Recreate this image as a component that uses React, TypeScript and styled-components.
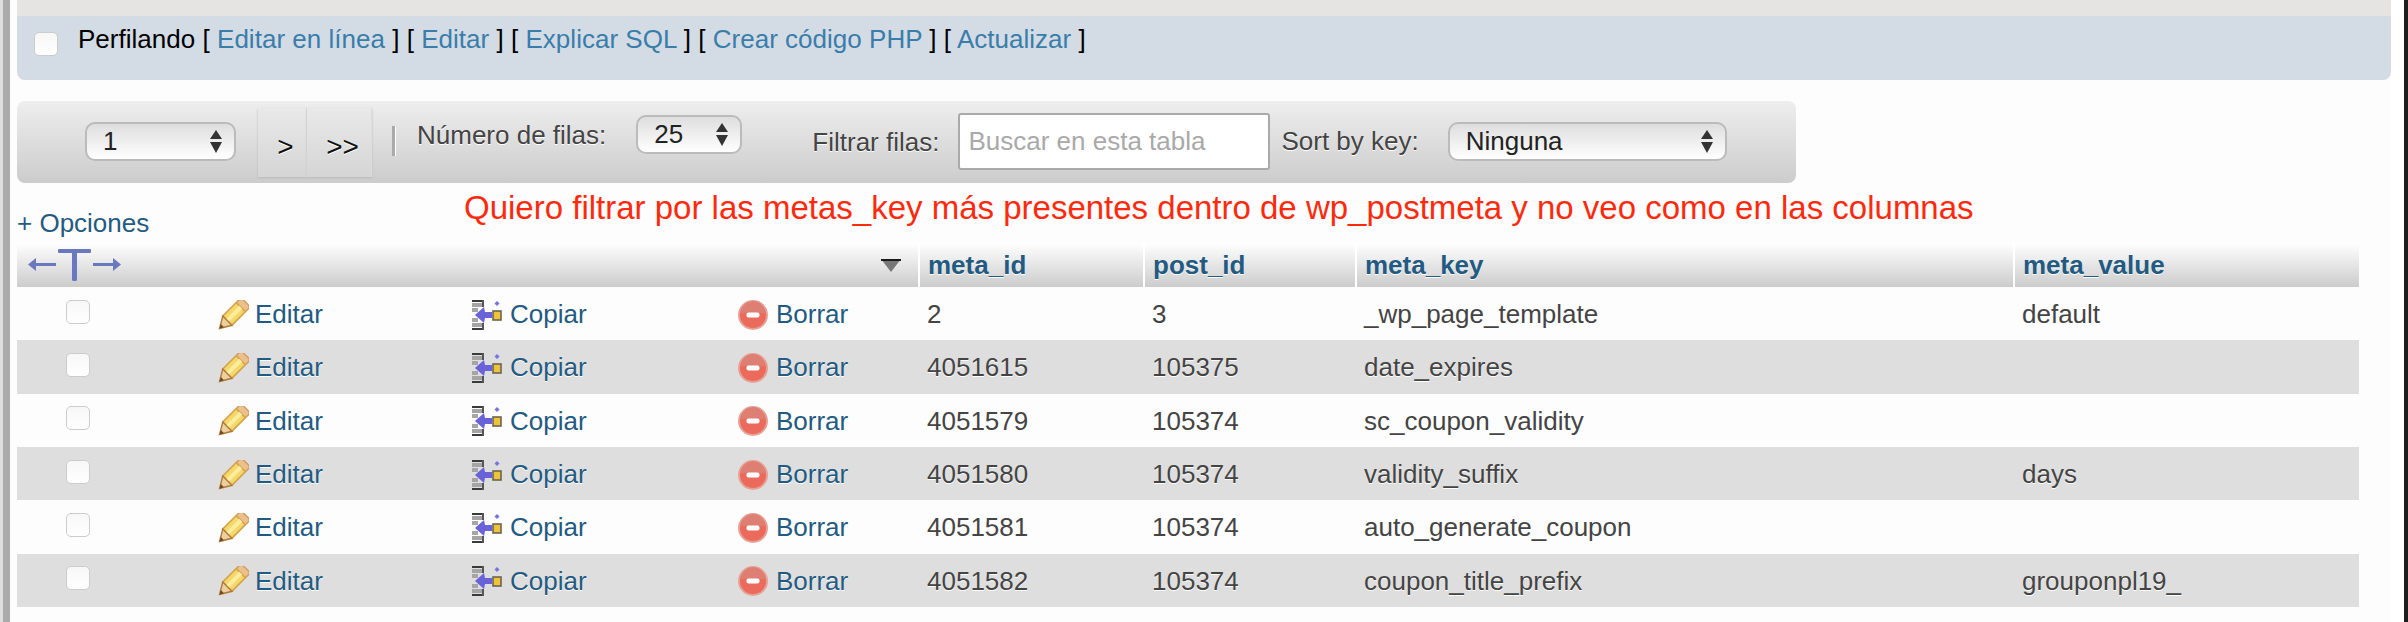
import React from 'react';
import styled, { createGlobalStyle } from 'styled-components';

const GlobalStyle = createGlobalStyle`
  html, body {
    background: #ffffff;
    margin: 0;
    overflow: hidden;
    padding: 0;
  }
  body {
    color: #444444;
    font-family: "Liberation Sans", Arial, sans-serif;
    font-size: 26px;
  }
`;

const Frame = styled.div`
  display: flex;
  height: 622px;
  width: 2408px;
`;

const Rail = styled.div`
  background: #aaaaaa;
  border-left: 3px solid #dddddd;
  box-sizing: border-box;
  flex: 0 0 10px;
`;

const Main = styled.main`
  background: #fdfdfd;
  flex: 1;
  min-width: 0;
  padding-left: 7px;
`;

const Gutter = styled.div`
  background: #ffffff;
  flex: 0 0 13px;
`;

const Edge = styled.div`
  background: #1e1e1e;
  flex: 0 0 4px;
`;

const TopBand = styled.div`
  background: #e5e4e3;
  height: 16px;
`;

const Notice = styled.div`
  align-items: flex-start;
  background: #d3dce4;
  border-radius: 0 0 8px 8px;
  box-sizing: border-box;
  color: #000000;
  display: flex;
  height: 64px;
  padding: 8px 0 0 17px;
  margin-bottom: 21px;
`;

const NoticeText = styled.span`
  letter-spacing: 0.02px;
  line-height: 30px;
  margin-left: 20px;
  a {
    color: #3a7dab;
    text-decoration: none;
  }
`;

const CheckBox = styled.input.attrs({ type: 'checkbox' })<{ $top?: number }>`
  appearance: none;
  background: linear-gradient(#f7f7f7, #ffffff);
  border: 1px solid #cccccc;
  border-radius: 5px;
  box-sizing: border-box;
  display: block;
  height: 24px;
  margin: ${(p) => p.$top ?? 0}px 0 0 0;
  width: 24px;
`;

const Toolbar = styled.div`
  align-items: flex-start;
  background: linear-gradient(#eeeeee, #cccccc);
  border-radius: 8px;
  box-sizing: border-box;
  color: #444444;
  display: flex;
  height: 82px;
  padding-left: 68px;
  text-shadow: 0 1px 0 #ffffff;
  width: 1779px;
`;

const SelectShell = styled.div<{ $left: number; $top: number; $width: number }>`
  flex: 0 0 ${(p) => p.$width}px;
  height: 39px;
  margin-left: ${(p) => p.$left}px;
  margin-top: ${(p) => p.$top}px;
  position: relative;
`;

const NativeSelect = styled.select`
  appearance: none;
  background: linear-gradient(#dedede, #ffffff);
  border: 2px solid #bbbbbb;
  border-radius: 10px;
  box-sizing: border-box;
  color: #222222;
  font-family: inherit;
  font-size: 26px;
  height: 39px;
  padding: 0 0 2px 16px;
  width: 100%;
`;

const StepArrows = styled.svg`
  height: 24px;
  pointer-events: none;
  position: absolute;
  right: 13px;
  top: 8px;
  width: 14px;
`;

const NavGroup = styled.div`
  display: flex;
  height: 69px;
  margin-left: 22px;
  margin-top: 7px;
`;

const NavButton = styled.button<{ $width: number }>`
  background: linear-gradient(#e9e9e9, #d5d5d5);
  border: 0;
  border-right: 1px solid #dddddd;
  box-shadow: 0 1px 2px #bbbbbb;
  color: #111111;
  font-family: inherit;
  font-size: 28px;
  padding: 8px 0 0 7px;
  text-shadow: 0 1px 0 #ffffff;
  width: ${(p) => p.$width}px;
`;

const Divider = styled.div`
  background: #aaaaaa;
  box-shadow: 1px 0 0 #ffffff;
  flex: 0 0 3px;
  height: 30px;
  margin-left: 20px;
  margin-top: 25px;
`;

const BarLabel = styled.label<{ $left: number; $top: number }>`
  line-height: 30px;
  margin-left: ${(p) => p.$left}px;
  margin-top: ${(p) => p.$top}px;
  white-space: nowrap;
`;

const SearchInput = styled.input`
  background: #ffffff;
  border: 2px solid #aaaaaa;
  border-radius: 3px;
  box-sizing: border-box;
  flex: 0 0 312px;
  font-family: inherit;
  font-size: 26px;
  height: 57px;
  margin-left: 19px;
  margin-top: 12px;
  min-width: 0;
  padding: 0 0 0 8px;
  width: 312px;
  &::placeholder {
    color: #a9a9a9;
  }
`;

const OptionsRow = styled.div`
  align-items: flex-start;
  display: flex;
  height: 60px;
`;

const OptionsLink = styled.a`
  color: #235a81;
  flex: 0 0 447px;
  line-height: 30px;
  margin-top: 25px;
`;

const RequestNote = styled.p`
  color: #ff2a0d;
  font-size: 33px;
  line-height: 36px;
  margin: 7px 0 0 0;
  white-space: nowrap;
`;

const DataTable = styled.table`
  border-collapse: collapse;
  border-spacing: 0;
  table-layout: fixed;
  width: 2342px;
`;

const HeadCell = styled.th`
  background: linear-gradient(#ffffff, #cccccc);
  border-right: 2px solid #ffffff;
  box-sizing: border-box;
  color: #235a81;
  font-size: 26px;
  font-weight: 700;
  height: 44px;
  padding: 0 0 0 8px;
  text-align: left;
  text-shadow: 0 1px 0 #ffffff;
  vertical-align: middle;
  &:last-child {
    border-right: 0;
  }
`;

const HeadTools = styled.div`
  align-items: center;
  display: flex;
  justify-content: space-between;
  padding-right: 17px;
`;

const Row = styled.tr<{ $even: boolean }>`
  background: ${(p) => (p.$even ? '#dedede' : '#fdfdfd')};
  height: 53.33px;
  text-shadow: ${(p) => (p.$even ? '0 1px 0 #ffffff' : 'none')};
`;

const Cell = styled.td`
  box-sizing: border-box;
  color: #444444;
  padding: 2px 0 0 8px;
  vertical-align: middle;
  white-space: nowrap;
`;

const CheckCell = styled.td`
  box-sizing: border-box;
  padding: 0 0 4px 49px;
  vertical-align: middle;
`;

const ActionLink = styled.a`
  align-items: center;
  color: #235a81;
  display: flex;
  gap: 6px;
`;

const ColumnResizeIcon = () => (
  <svg width="93" height="34" viewBox="0 0 93 34" style={{ marginLeft: 3 }}>
    <g fill="#6a78bd">
      <rect x="4" y="15" width="24" height="3" />
      <path d="M0 16.5 L8 10 V23 Z" />
      <rect x="65" y="15" width="24" height="3" />
      <path d="M93 16.5 L85 10 V23 Z" />
      <rect x="30" y="1" width="33" height="4" rx="1" />
      <rect x="44" y="1" width="5" height="32" rx="1.5" />
    </g>
  </svg>
);

const SortIcon = () => (
  <svg width="20" height="13" viewBox="0 0 20 13">
    <path d="M0 0 H20 L10 13 Z" fill="#777777" />
    <path d="M0 1 H20" stroke="#1a1a1a" strokeWidth="2" />
  </svg>
);

const PencilIcon = () => (
  <svg width="32" height="30" viewBox="0 0 32 30">
    <g transform="rotate(45 16 15)">
      <rect x="9.5" y="-3" width="13" height="8" rx="2.5" fill="#ecc08c" stroke="#d09a5c" strokeWidth="1.4" />
      <rect x="9.5" y="4" width="13" height="19" fill="#f4d968" stroke="#d6a24e" strokeWidth="1.6" />
      <rect x="14" y="4" width="4" height="19" fill="#fbeca0" />
      <path d="M9.5 23 H22.5 L16 34 Z" fill="#eccfa0" stroke="#b27a36" strokeWidth="1.4" />
      <path d="M13.8 30 L18.2 30 L16 34 Z" fill="#6d4620" />
    </g>
  </svg>
);

const CopyIcon = () => (
  <svg width="30" height="30" viewBox="0 0 30 30" style={{ marginRight: 2 }}>
    <g fill="#3a3a3a">
      <rect x="0" y="0" width="12" height="2" />
      <rect x="0" y="28" width="12" height="2" />
    </g>
    <g fill="#a5a5a5">
      <rect x="0" y="3" width="10" height="4" />
      <rect x="0" y="8" width="6" height="4" />
      <rect x="0" y="18" width="6" height="4" />
      <rect x="0" y="23" width="10" height="4" />
    </g>
    <rect x="10" y="0" width="2" height="7" fill="#555555" />
    <rect x="10" y="23" width="2" height="7" fill="#555555" />
    <path d="M3 15 L12 7 L13 12 H20 V18 H13 L12 23 Z" fill="#6a62d8" />
    <rect x="21" y="11" width="8" height="9" fill="#f0c23a" stroke="#6a6550" strokeWidth="1.6" />
    <path d="M25 1 L27.5 3.5 L25 6 L22.5 3.5 Z" fill="#7a72e0" />
  </svg>
);

const DeleteIcon = () => (
  <svg width="30" height="30" viewBox="0 0 30 30" style={{ marginRight: 2 }}>
    <circle cx="15" cy="15" r="14" fill="#ec6a5c" stroke="#e6a195" strokeWidth="2" />
    <path d="M3 13 A12 12 0 0 1 27 13 Z" fill="#de7f73" />
    <rect x="8.5" y="12.5" width="13" height="5" rx="2" fill="#ffffff" />
  </svg>
);

const Steppers = () => (
  <StepArrows viewBox="0 0 14 24">
    <path d="M7 0 L13 9 H1 Z" fill="#333333" />
    <path d="M7 23 L13 12 H1 Z" fill="#333333" />
  </StepArrows>
);

const rows = [
  { id: '2', post: '3', key: '_wp_page_template', value: 'default' },
  { id: '4051615', post: '105375', key: 'date_expires', value: '' },
  { id: '4051579', post: '105374', key: 'sc_coupon_validity', value: '' },
  { id: '4051580', post: '105374', key: 'validity_suffix', value: 'days' },
  { id: '4051581', post: '105374', key: 'auto_generate_coupon', value: '' },
  { id: '4051582', post: '105374', key: 'coupon_title_prefix', value: 'grouponpl19_' },
];

const columnWidths = [192, 255, 266, 189, 225, 212, 658, 345];

export default function App() {
  return (
    <>
      <GlobalStyle />
      <Frame>
        <Rail />
        <Main>
          <TopBand />
          <Notice>
            <CheckBox $top={8} />
            <NoticeText>
              Perfilando [ <a href="#a">Editar en línea</a> ] [ <a href="#b">Editar</a> ] [{' '}
              <a href="#c">Explicar SQL</a> ] [ <a href="#d">Crear código PHP</a> ] [{' '}
              <a href="#e">Actualizar</a> ]
            </NoticeText>
          </Notice>

          <Toolbar>
            <SelectShell $left={0} $top={21} $width={151}>
              <NativeSelect defaultValue="1">
                <option>1</option>
              </NativeSelect>
              <Steppers />
            </SelectShell>
            <NavGroup>
              <NavButton $width={49}>&gt;</NavButton>
              <NavButton $width={65}>&gt;&gt;</NavButton>
            </NavGroup>
            <Divider />
            <BarLabel $left={22} $top={19}>Número de filas:</BarLabel>
            <SelectShell $left={30} $top={14} $width={106}>
              <NativeSelect defaultValue="25">
                <option>25</option>
              </NativeSelect>
              <Steppers />
            </SelectShell>
            <BarLabel $left={70} $top={26}>Filtrar filas:</BarLabel>
            <SearchInput placeholder="Buscar en esta tabla" />
            <BarLabel $left={11} $top={25}>Sort by key:</BarLabel>
            <SelectShell $left={29} $top={21} $width={279}>
              <NativeSelect defaultValue="Ninguna">
                <option>Ninguna</option>
              </NativeSelect>
              <Steppers />
            </SelectShell>
          </Toolbar>

          <OptionsRow>
            <OptionsLink>+ Opciones</OptionsLink>
            <RequestNote>
              Quiero filtrar por las metas_key más presentes dentro de wp_postmeta y no veo como en las columnas
            </RequestNote>
          </OptionsRow>

          <DataTable>
            <colgroup>
              {columnWidths.map((w, i) => (
                <col key={i} width={w} />
              ))}
            </colgroup>
            <thead>
              <tr>
                <HeadCell colSpan={4}>
                  <HeadTools>
                    <ColumnResizeIcon />
                    <SortIcon />
                  </HeadTools>
                </HeadCell>
                <HeadCell>meta_id</HeadCell>
                <HeadCell>post_id</HeadCell>
                <HeadCell>meta_key</HeadCell>
                <HeadCell>meta_value</HeadCell>
              </tr>
            </thead>
            <tbody>
              {rows.map((row, i) => (
                <Row key={row.id} $even={i % 2 === 1}>
                  <CheckCell>
                    <CheckBox />
                  </CheckCell>
                  <Cell>
                    <ActionLink>
                      <PencilIcon />
                      Editar
                    </ActionLink>
                  </Cell>
                  <Cell>
                    <ActionLink>
                      <CopyIcon />
                      Copiar
                    </ActionLink>
                  </Cell>
                  <Cell>
                    <ActionLink>
                      <DeleteIcon />
                      Borrar
                    </ActionLink>
                  </Cell>
                  <Cell>{row.id}</Cell>
                  <Cell>{row.post}</Cell>
                  <Cell>{row.key}</Cell>
                  <Cell>{row.value}</Cell>
                </Row>
              ))}
            </tbody>
          </DataTable>
        </Main>
        <Gutter />
        <Edge />
      </Frame>
    </>
  );
}
